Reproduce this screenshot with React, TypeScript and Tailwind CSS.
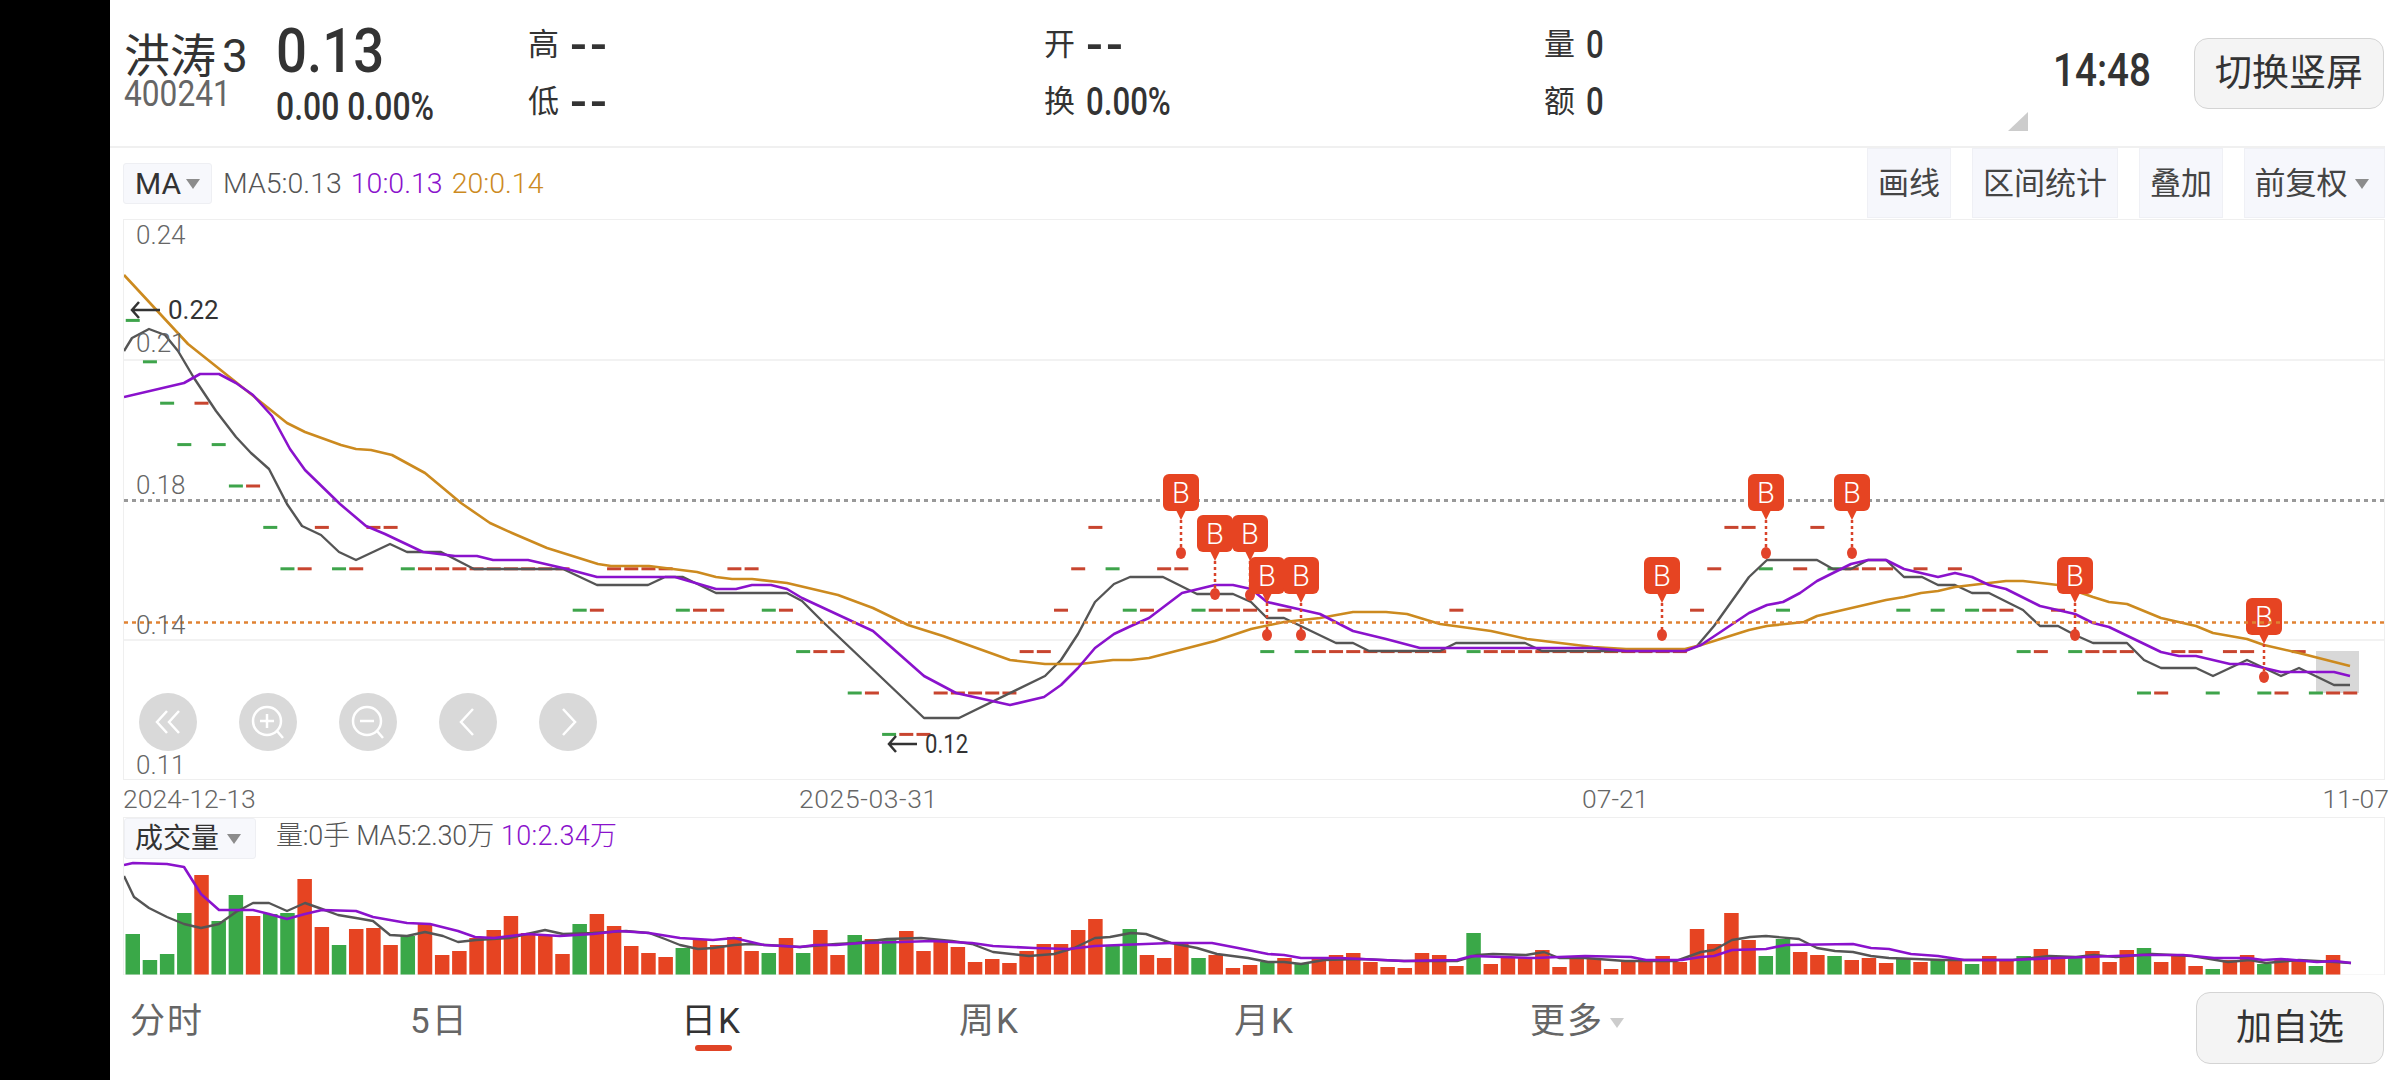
const FONT = "font-['Roboto','Noto_Sans_CJK_SC',sans-serif]";

// candle x in page pixels
const cx = (i: number) => 131.75 + 17.19 * i;
// price in cents to page y
const py = (cents: number) => 692 - (cents - 13) * 41.4;

const candles =
  "22g 21g 20g 19g 20r 19g 18g 18r 17g 16g 16r 17r 16g 16r 17r 17r 16g 16r 16r 16r 16r 16r 16r 16r 16r 16r 15g 15r 16r 16r 16r 16r 15g 15r 15r 16r 16r 15g 15r 14g 14r 14r 13g 13r 12g 12r 12r 13r 13r 13r 13r 13r 14r 14r 15r 16r 17r 16g 15g 15r 16r 16r 15g 15r 15r 15r 14g 15r 14g 14r 14r 14r 14r 14r 14r 14r 14r 15r 14g 14r 14r 14r 14r 14r 14r 14r 14r 14r 14r 14r 14r 15r 16r 17r 17r 16g 15g 16r 17r 16g 16r 16r 16r 15g 16r 15g 16r 15g 15r 15r 14g 14r 15r 14g 14r 14r 14r 13g 13r 14r 14r 13g 14r 14r 13g 13r 14r 13g 13r 13r".split(
    " "
  );

// bar tops, read from the reference (973.7 is the base)
const barTops = [
  933, 959, 953, 912, 874, 920, 894, 915, 913, 912, 878, 926, 944, 928, 927, 944, 935, 923, 954, 950, 937, 929, 915, 932,
  935, 953, 923, 913, 925, 945, 952, 956, 947, 939, 944, 936, 950, 952, 937, 952, 929, 954, 934, 938, 938, 930, 950, 940,
  946, 961, 958, 962, 950, 943, 943, 929, 918, 945, 928, 954, 957, 943, 957, 954, 967, 964, 961, 957, 962, 956, 954, 952,
  961, 966, 967, 952, 954, 965, 932, 963, 957, 957, 949, 966, 958, 957, 968, 960, 958, 955, 961, 928, 943, 912, 939, 955,
  938, 951, 954, 955, 959, 957, 962, 957, 961, 959, 959, 963, 955, 959, 955, 948, 957, 957, 950, 961, 949, 947, 961, 955,
  965, 968, 959, 954, 963, 959, 959, 965, 954,
];

const gray =
  "123,350 131,337 148,328 164,334 177,350 193,377 215,410 235,436 250,452 268,468 286,503 301,525 320,534 338,551 355,559 389,543 406,551 440,551 473,568 562,568 596,584 647,584 664,576 682,576 715,592 786,592 801,600 821,620 923,717 958,717 1044,675 1060,659 1077,633 1094,601 1113,583 1129,576 1162,576 1196,593 1232,593 1250,601 1266,617 1283,617 1335,642 1352,642 1368,650 1439,650 1455,642 1524,642 1541,650 1684,650 1696,645 1713,625 1748,576 1766,559 1816,559 1832,568 1850,568 1867,559 1885,559 1903,576 1921,576 1937,584 1954,584 1971,592 1988,592 2022,609 2039,625 2057,625 2074,634 2092,642 2126,642 2143,659 2160,667 2195,667 2212,675 2246,659 2263,667 2280,675 2298,667 2333,684 2349,684";
const purple =
  "123,396 183,382 199,373 218,373 235,382 252,394 271,415 289,448 304,469 339,503 365,525 384,533 422,551 454,555 476,555 492,559 527,559 566,568 596,576 674,576 715,588 735,588 751,584 770,584 786,588 801,597 872,630 923,675 955,692 1009,704 1043,696 1060,684 1077,667 1094,647 1113,633 1130,625 1148,617 1181,592 1214,584 1232,584 1250,588 1266,601 1319,613 1352,630 1385,638 1419,647 1592,647 1625,650 1684,650 1700,644 1748,612 1766,604 1782,601 1799,592 1816,580 1850,563 1867,559 1885,559 1903,568 1937,576 1954,572 1971,576 1988,584 2005,588 2039,605 2074,613 2092,622 2108,626 2160,651 2178,655 2195,655 2229,663 2246,663 2280,671 2333,671 2349,675";
const orange =
  "123,274 187,343 256,398 286,422 304,431 340,444 355,448 370,449 391,454 424,472 460,502 489,522 511,532 546,547 597,563 610,565 648,565 696,571 715,576 731,578 751,578 786,582 837,594 872,607 907,624 942,635 1009,659 1044,663 1079,663 1112,659 1130,659 1148,657 1214,640 1250,628 1283,621 1319,617 1352,611 1385,611 1406,613 1439,623 1490,630 1526,638 1592,646 1625,648 1684,648 1700,644 1713,640 1748,629 1766,625 1803,621 1816,615 1885,599 1903,596 1920,592 1937,590 1954,586 1988,582 2005,580 2022,580 2057,584 2092,596 2108,601 2126,603 2160,617 2195,625 2212,632 2246,638 2263,644 2298,652 2349,665";

const volPurple =
  "123,864 132,862 166,863 183,866 200,893 218,909 252,909 268,913 286,918 304,913 321,909 355,910 372,916 406,922 429,923 457,930 474,936 493,937 526,933 559,935 592,933 618,930 648,932 679,937 712,939 733,937 763,944 799,946 814,944 835,944 860,942 900,941 931,940 971,942 992,945 1033,947 1068,948 1094,945 1119,944 1170,942 1211,942 1237,947 1267,953 1283,954 1300,957 1339,957 1403,960 1456,959 1471,955 1533,957 1558,956 1584,955 1630,956 1645,959 1681,959 1700,956 1713,955 1731,949 1765,948 1785,944 1852,943 1870,947 1888,948 1910,953 1937,955 1963,959 2012,959 2057,957 2142,954 2182,954 2213,957 2247,957 2262,959 2280,958 2316,961 2334,960 2350,962";
const volGray =
  "123,875 133,896 148,907 166,916 183,923 200,927 218,923 235,911 252,902 268,902 286,910 304,902 321,908 337,914 355,917 372,920 389,934 406,935 424,931 442,935 457,941 475,939 508,937 526,933 544,929 562,933 592,932 625,930 648,932 664,938 679,944 697,948 712,947 733,944 748,943 784,945 799,946 835,943 855,942 886,938 920,937 951,940 971,943 992,951 1028,955 1053,953 1073,947 1094,937 1109,936 1130,932 1145,933 1170,942 1196,947 1216,953 1247,957 1267,961 1283,961 1300,963 1323,959 1359,958 1403,960 1456,960 1476,954 1492,953 1525,954 1543,951 1558,957 1584,957 1624,960 1675,960 1700,951 1713,949 1731,939 1749,936 1765,935 1798,938 1816,947 1834,950 1852,951 1870,955 1888,957 1941,959 1990,959 2012,959 2048,955 2075,956 2093,954 2115,956 2151,953 2191,955 2227,961 2249,959 2265,962 2298,959 2334,961 2350,962";

const markers = [
  { x: 1180, top: 473, dot: 552 },
  { x: 1214, top: 514, dot: 593 },
  { x: 1249, top: 514, dot: 594 },
  { x: 1266, top: 556, dot: 634 },
  { x: 1300, top: 556, dot: 634 },
  { x: 1661, top: 556, dot: 634 },
  { x: 1765, top: 473, dot: 552 },
  { x: 1851, top: 473, dot: 552 },
  { x: 2074, top: 556, dot: 634 },
  { x: 2263, top: 597, dot: 676 },
];

const Caret = ({ className }: { className: string }) => (
  <span
    className={`w-0 h-0 border-x-[7px] border-x-transparent border-t-[10px] shrink-0 ${className}`}
  />
);

const ToolButton = ({ label, caret, className }: { label: string; caret?: boolean; className: string }) => (
  <div
    className={`h-[70px] pt-[2px] flex items-center justify-center gap-[7px] bg-[#f6f7fc] border border-[#eff0f5] text-[31px] text-[#444] ${className}`}
  >
    <span>{label}</span>
    {caret && <Caret className="border-t-[#8c8c8c]" />}
  </div>
);

const Stat = ({ name, value, dash }: { name: string; value: string; dash?: boolean }) => (
  <div className="flex items-center gap-[11px] h-[36px] text-[#333] whitespace-nowrap">
    <span className="text-[31px]">{name}</span>
    {dash ? (
      <span className="text-[50px] leading-[36px] tracking-[3px] font-medium">{value}</span>
    ) : (
      <span className="text-[39px] leading-[36px] font-medium inline-block origin-left scale-x-[.8]">{value}</span>
    )}
  </div>
);

const NavButton = ({ children }: { children: React.ReactNode }) => (
  <div className="w-[58px] h-[58px] rounded-full bg-[#d9d9d9] flex items-center justify-center">
    <svg viewBox="0 0 58 58" className="w-[58px] h-[58px]" fill="none" stroke="#fff" strokeWidth="2.5">
      {children}
    </svg>
  </div>
);

const PriceChart = () => (
  <div className="relative ml-[13px] mr-[15px] h-[561px] bg-white border border-[#efefef] overflow-hidden">
    <svg viewBox="123 219 2262 561" className="absolute inset-0 w-[2262px] h-[561px]">
      <line x1="123" x2="2385" y1="359" y2="359" stroke="#eee" strokeWidth="1.5" />
      <line x1="123" x2="2385" y1="639" y2="639" stroke="#eee" strokeWidth="1.5" />
      <line x1="123" x2="2385" y1="499.5" y2="499.5" stroke="#999" strokeWidth="3" strokeDasharray="4 4" />
      <rect x="2315" y="650" width="43" height="42" fill="#d8d8d8" />
      {candles.map((c, i) => (
        <rect
          key={i}
          x={cx(i) - 7}
          y={py(parseInt(c)) - 1.5}
          width="14"
          height="3"
          fill={c.endsWith("g") ? "#3ea44b" : "#c8452f"}
        />
      ))}
      <polyline points={gray} fill="none" stroke="#555" strokeWidth="2.4" strokeLinejoin="round" />
      <polyline points={orange} fill="none" stroke="#cc8a1f" strokeWidth="2.6" strokeLinejoin="round" />
      <polyline points={purple} fill="none" stroke="#8a12cc" strokeWidth="2.6" strokeLinejoin="round" />
      {markers.map((m) => (
        <g key={m.x}>
          <line x1={m.x} x2={m.x} y1={m.top + 40} y2={m.dot} stroke="#d9432a" strokeWidth="2.5" strokeDasharray="3 3" />
          <ellipse cx={m.x} cy={m.dot} rx="5" ry="6" fill="#e2432a" />
          <path d={`M${m.x - 5} ${m.top + 36} L${m.x} ${m.top + 46} L${m.x + 5} ${m.top + 36} Z`} fill="#e64422" />
          <rect x={m.x - 18} y={m.top} width="36" height="37" rx="6" fill="#e64422" />
          <text
            x={m.x}
            y={m.top + 29}
            textAnchor="middle"
            fill="#fff"
            fontSize="29"
            fontFamily="Roboto, sans-serif"
            fontWeight="300"
          >
            B
          </text>
        </g>
      ))}
      <line x1="123" x2="2385" y1="621.5" y2="621.5" stroke="#e08233" strokeWidth="2.5" strokeDasharray="4 4" />
    </svg>

    <div className="absolute left-[12px] top-[0px] text-[26px] leading-[30px] text-[#666] font-light">0.24</div>
    <div className="absolute left-[12px] top-[108px] text-[26px] leading-[30px] text-[#666] font-light">0.21</div>
    <div className="absolute left-[12px] top-[250px] text-[26px] leading-[30px] text-[#666] font-light">0.18</div>
    <div className="absolute left-[12px] top-[390px] text-[26px] leading-[30px] text-[#666] font-light">0.14</div>
    <div className="absolute left-[12px] top-[530px] text-[26px] leading-[30px] text-[#666] font-light">0.11</div>
    <div className="absolute left-[6px] top-[75px] text-[26px] leading-[30px] text-[#333] flex items-center gap-[8px]">
      <svg viewBox="0 0 30 20" className="w-[30px] h-[20px]" fill="none" stroke="#333" strokeWidth="2.5">
        <path d="M30 10H2M9 2L2 10L9 18" />
      </svg>
      <span>0.22</span>
    </div>
    <div className="absolute left-[763px] top-[509px] text-[26px] leading-[30px] text-[#333] flex items-center gap-[8px]">
      <svg viewBox="0 0 30 20" className="w-[30px] h-[20px]" fill="none" stroke="#333" strokeWidth="2.5">
        <path d="M30 10H2M9 2L2 10L9 18" />
      </svg>
      <span className="inline-block origin-left scale-x-[.85]">0.12</span>
    </div>

    <div className="absolute left-[15px] top-[473px] flex gap-[42px]">
      <NavButton>
        <path d="M28 18L18 29L28 40M40 18L30 29L40 40" />
      </NavButton>
      <NavButton>
        <circle cx="28" cy="28" r="14" />
        <path d="M38 38L44 45M21 28H35M28 21V35" />
      </NavButton>
      <NavButton>
        <circle cx="28" cy="28" r="14" />
        <path d="M38 38L44 45M21 28H35" />
      </NavButton>
      <NavButton>
        <path d="M34 16L22 29L34 42" />
      </NavButton>
      <NavButton>
        <path d="M24 16L36 29L24 42" />
      </NavButton>
    </div>
  </div>
);

const VolumeChart = () => (
  <div className="relative ml-[13px] mr-[15px] h-[158px] border border-b-0 border-[#efefef] overflow-hidden">
    <svg viewBox="123 817 2262 158" className="absolute inset-0 w-[2262px] h-[158px]">
      {barTops.map((top, i) => (
        <rect
          key={i}
          x={cx(i) - 7.25}
          y={top}
          width="14.5"
          height={974 - top}
          fill={candles[i].endsWith("g") ? "#3aa848" : "#e64422"}
        />
      ))}
      <polyline points={volGray} fill="none" stroke="#555" strokeWidth="2.4" strokeLinejoin="round" />
      <polyline points={volPurple} fill="none" stroke="#8a12cc" strokeWidth="2.6" strokeLinejoin="round" />
      <line x1="123" x2="2385" y1="974" y2="974" stroke="#efefef" strokeWidth="1" />
    </svg>
    <div className="relative flex items-start">
      <div className="w-[132px] h-[41px] pl-[10px] flex items-center gap-[8px] bg-[#f7f8fc] border border-[#eeeff3] rounded-[3px] text-[28px] text-[#333]">
        <span>成交量</span>
        <Caret className="border-t-[#8c8c8c]" />
      </div>
      <div className="ml-[20px] h-[36px] flex items-center text-[27px] text-[#555] font-light whitespace-nowrap">
        <span className="tracking-[-.2px]">量:0手 MA5:2.30万</span>
        <span className="ml-[7px] tracking-[.3px] text-[#8a12cc]">10:2.34万</span>
      </div>
    </div>
  </div>
);

const Tab = ({ label, width, active, children }: { label: string; width: string; active?: boolean; children?: React.ReactNode }) => (
  <div className={`relative flex items-center gap-[6px] text-[35px] tracking-[2px] whitespace-nowrap ${width} ${active ? "text-[#333]" : "text-[#666]"}`}>
    <span>{label}</span>
    {children}
    {active && <span className="absolute left-[14px] top-[49px] w-[37px] h-[6px] rounded-full bg-[#e04426]" />}
  </div>
);

export default function App() {
  return (
    <div className={`flex w-[2400px] h-[1080px] bg-white overflow-hidden ${FONT}`}>
      <div className="w-[110px] shrink-0 bg-black" />
      <main className="flex-1 flex flex-col min-w-0">
        {/* Header */}
        <header className="relative h-[146px] shrink-0 flex">
          <div className="w-[166px] pl-[14px] pt-[33px]">
            <div className="text-[46px] leading-[47px] text-[#333] whitespace-nowrap">
              洪涛<span className="ml-[6px]">3</span>
            </div>
            <div className="text-[36px] leading-[28px] text-[#666] origin-left scale-x-[.88]">400241</div>
          </div>
          <div className="w-[252px] pt-[15px]">
            <div className="text-[62px] leading-[72px] font-medium text-[#333] inline-block origin-left scale-x-[.88]">0.13</div>
            <div className="text-[38px] leading-[36px] font-medium text-[#333] mt-[2px] origin-left scale-x-[.84] whitespace-nowrap">0.00 0.00%</div>
          </div>
          <div className="w-[516px] pt-[27px] flex flex-col gap-[21px]">
            <Stat name="高" value="--" dash />
            <Stat name="低" value="--" dash />
          </div>
          <div className="w-[500px] pt-[27px] flex flex-col gap-[21px]">
            <Stat name="开" value="--" dash />
            <Stat name="换" value="0.00%" />
          </div>
          <div className="w-[470px] pt-[27px] flex flex-col gap-[21px]">
            <Stat name="量" value="0" />
            <Stat name="额" value="0" />
          </div>
          <div className="absolute left-[1943px] top-[48px] text-[46px] leading-[44px] font-medium text-[#333] origin-left scale-x-[.84]">14:48</div>
          <svg viewBox="0 0 20 19" className="absolute left-[1898px] top-[112px] w-[20px] h-[19px]">
            <path d="M20 0V19H0Z" fill="#ccc" />
          </svg>
          <div className="absolute left-[2084px] top-[38px] w-[190px] h-[71px] flex items-center justify-center rounded-[14px] bg-[#f4f4f4] border border-[#d4d4d4] text-[37px] text-[#333]">
            切换竖屏
          </div>
        </header>
        <div className="h-[2px] mr-[15px] bg-[#f0f0f0] shrink-0" />

        {/* Indicator bar */}
        <div className="h-[71px] shrink-0 flex mr-[15px]">
          <div className="ml-[13px] mt-[15px] w-[89px] h-[41px] flex items-center justify-center gap-[5px] bg-[#f7f8fc] border border-[#eeeff3] rounded-[3px] text-[30px] text-[#333]">
            <span>MA</span>
            <Caret className="border-t-[#8c8c8c]" />
          </div>
          <div className="ml-[11px] flex items-center gap-[9px] h-[72px] text-[28.5px] font-light whitespace-nowrap">
            <span className="text-[#555]">MA5:0.13</span>
            <span className="text-[#8a12cc]">10:0.13</span>
            <span className="text-[#cc8a1f]">20:0.14</span>
          </div>
          <div className="ml-auto flex gap-[21px]">
            <ToolButton label="画线" className="w-[84px]" />
            <ToolButton label="区间统计" className="w-[146px]" />
            <ToolButton label="叠加" className="w-[84px]" />
            <ToolButton label="前复权" caret className="w-[141px] pr-[6px]" />
          </div>
        </div>

        <PriceChart />

        {/* Date axis */}
        <div className="relative h-[37px] shrink-0 ml-[13px] mr-[11px] flex items-center justify-between text-[26.5px] text-[#666] font-light">
          <span>2024-12-13</span>
          <span className="absolute left-[676px] tracking-[.6px]">2025-03-31</span>
          <span className="absolute left-[1459px]">07-21</span>
          <span>11-07</span>
        </div>

        <VolumeChart />

        {/* Period tabs */}
        <div className="relative flex-1 flex items-center pl-[20px] pb-[10px]">
          <Tab label="分时" width="w-[280px]" />
          <Tab label="5日" width="w-[271px]" />
          <Tab label="日K" width="w-[278px]" active />
          <Tab label="周K" width="w-[275px]" />
          <Tab label="月K" width="w-[296px]" />
          <Tab label="更多" width="w-[200px]">
            <Caret className="border-t-[#ccc]" />
          </Tab>
          <div className="absolute left-[2086px] top-[17px] w-[188px] h-[72px] flex items-center justify-center rounded-[14px] bg-[#f4f4f4] border border-[#d4d4d4] text-[36px] text-[#333]">
            加自选
          </div>
        </div>
      </main>
    </div>
  );
}
